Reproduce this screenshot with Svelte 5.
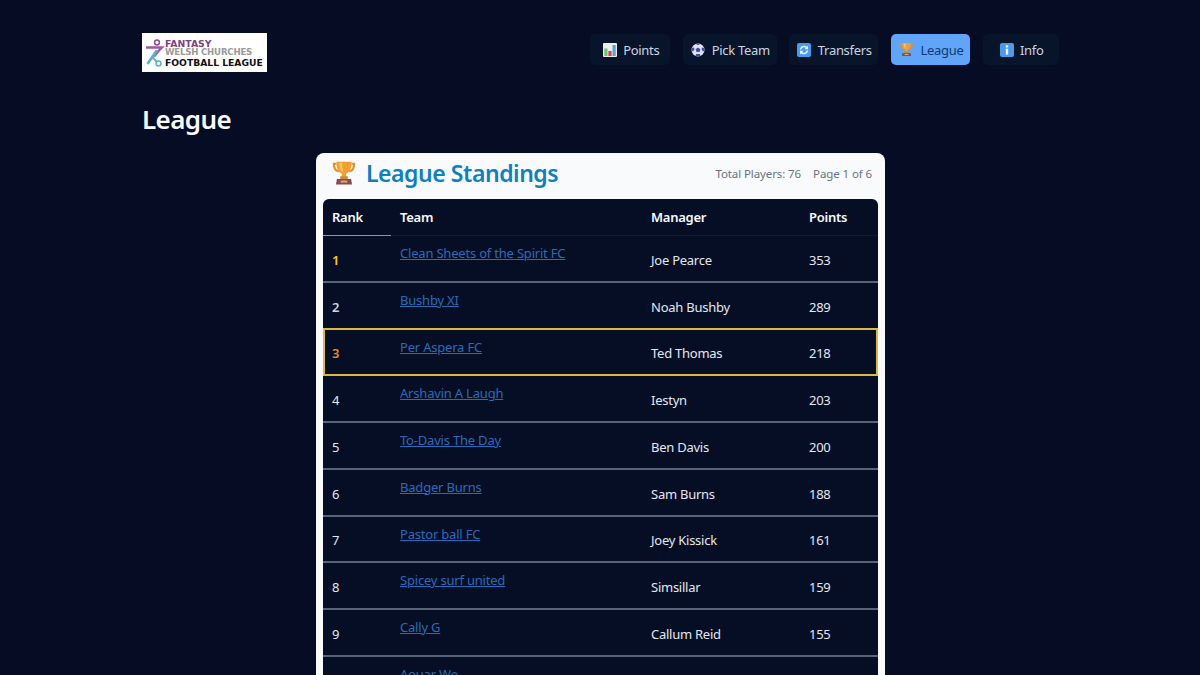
<script>
  const rows = [
    { rank: 1, team: 'Clean Sheets of the Spirit FC', manager: 'Joe Pearce', points: 353, cls: 'gold' },
    { rank: 2, team: 'Bushby XI', manager: 'Noah Bushby', points: 289, cls: 'silver' },
    { rank: 3, team: 'Per Aspera FC', manager: 'Ted Thomas', points: 218, cls: 'bronze', me: true },
    { rank: 4, team: 'Arshavin A Laugh', manager: 'Iestyn', points: 203 },
    { rank: 5, team: 'To-Davis The Day', manager: 'Ben Davis', points: 200 },
    { rank: 6, team: 'Badger Burns', manager: 'Sam Burns', points: 188 },
    { rank: 7, team: 'Pastor ball FC', manager: 'Joey Kissick', points: 161 },
    { rank: 8, team: 'Spicey surf united', manager: 'Simsillar', points: 159 },
    { rank: 9, team: 'Cally G', manager: 'Callum Reid', points: 155 },
    { rank: 10, team: 'Aouar We', manager: 'Luca Taylor', points: 155 }
  ];
  const nav = [
    { label: 'Points', icon: 'chart', w: 80 },
    { label: 'Pick Team', icon: 'ball', w: 94 },
    { label: 'Transfers', icon: 'swap', w: 89 },
    { label: 'League', icon: 'trophy', w: 79.500, active: true },
    { label: 'Info', icon: 'info', w: 76 }
  ];
</script>

{#snippet trophy(size)}
  <svg width={size} height={size} viewBox="0 0 24 24" aria-hidden="true">
    <path d="M5 3.500H2.600c0 4 1.400 6.500 4.600 7M19 3.500h2.400c0 4-1.400 6.500-4.600 7" fill="none" stroke="#e0902a" stroke-width="1.900"/>
    <path d="M5 1.500h14c0 5-1 9.500-5 11v3h-4v-3c-4-1.500-5-6-5-11z" fill="#f0a030"/>
    <path d="M7.500 2.500h3c-.2 3.500 0 6 1 8.500-3-1-3.800-4.500-4-8.500z" fill="#f8c860"/>
    <rect x="8.500" y="15" width="7" height="2.500" fill="#c98a2c"/>
    <path d="M5.500 17.500h13l1 5h-15z" fill="#8a4a50"/>
    <rect x="9" y="19" width="6" height="1.800" fill="#d8b070"/>
  </svg>
{/snippet}

{#snippet icon(name)}
  {#if name === 'chart'}
    <svg width="14" height="14" viewBox="0 0 14 14" aria-hidden="true">
      <rect width="14" height="14" rx="1" fill="#eeeeea"/>
      <rect x="1.300" y="5.500" width="3.200" height="7.500" fill="#6cc46c"/>
      <rect x="5.400" y="8" width="3.200" height="5" fill="#e03c52"/>
      <rect x="9.500" y="2" width="3.200" height="11" fill="#5a9fe6"/>
    </svg>
  {:else if name === 'ball'}
    <svg width="14" height="14" viewBox="0 0 14 14" aria-hidden="true">
      <circle cx="7" cy="7" r="6.500" fill="#dfe4f5"/>
      <path d="M7 4.500l2.400 1.700-.9 2.800h-3l-.9-2.800z" fill="#3f4fa8"/>
      <path d="M5 .9L7 2.200 9 .9C8 .5 6 .5 5 .9zM1 5l1.800-.6.700 1.500-1.300 2.500-1.700-.6C.4 6.800.6 5.800 1 5zM13 5l-1.800-.6-.7 1.500 1.300 2.500 1.700-.6c.1-1 0-2-.5-2.800zM4.500 12.900l.6-1.900h3.800l.6 1.900c-1.500.5-3.500.5-5 0z" fill="#3f4fa8"/>
    </svg>
  {:else if name === 'swap'}
    <svg width="14" height="14" viewBox="0 0 14 14" aria-hidden="true">
      <rect width="14" height="14" rx="2" fill="#4a9be8"/>
      <path d="M3.500 6.500A3.600 3.600 0 0 1 10 5" fill="none" stroke="#f0f6fc" stroke-width="1.500"/>
      <path d="M11 2.800v3.400H7.600z" fill="#f0f6fc"/>
      <path d="M10.500 7.500A3.600 3.600 0 0 1 4 9" fill="none" stroke="#f0f6fc" stroke-width="1.500"/>
      <path d="M3 11.200V7.800h3.400z" fill="#f0f6fc"/>
    </svg>
  {:else if name === 'trophy'}
    {@render trophy(15)}
  {:else}
    <svg width="14" height="14" viewBox="0 0 14 14" aria-hidden="true">
      <rect width="14" height="14" rx="2" fill="#4a9be8"/>
      <rect x="5.800" y="2.300" width="2.400" height="2.200" fill="#f0f6fc"/>
      <rect x="5.800" y="5.700" width="2.400" height="6" fill="#f0f6fc"/>
    </svg>
  {/if}
{/snippet}

<div class="page">
  <header class="top">
    <div class="logo">
      <svg class="mark" width="22" height="30" viewBox="0 0 22 30" aria-hidden="true">
        <circle cx="14" cy="4.500" r="2.400" fill="none" stroke="#8a4a90" stroke-width="1.500"/>
        <path d="M3 9.500h16l-3 3-5 6" fill="none" stroke="#9a5aa0" stroke-width="2.400"/>
        <path d="M14 12L4.500 26" fill="none" stroke="#5ab4c8" stroke-width="2.600"/>
        <path d="M9 19l5 5" fill="none" stroke="#5ab4c8" stroke-width="1.800"/>
        <circle cx="15.500" cy="25.500" r="2.500" fill="none" stroke="#5ab4c8" stroke-width="1.500"/>
      </svg>
      <div class="logotext">
        <span class="l1">FANTASY</span>
        <span class="l2">WELSH CHURCHES</span>
        <span class="l3">FOOTBALL LEAGUE</span>
      </div>
    </div>
    <nav class="nav">
      {#each nav as item}
        <a class="navitem" class:active={item.active} href="#top" style="width: {item.w}px">
          {@render icon(item.icon)}
          <span>{item.label}</span>
        </a>
      {/each}
    </nav>
  </header>

  <h1>League</h1>

  <section class="card">
    <div class="cardhead">
      <div class="title">
        {@render trophy(26)}
        <h2>League Standings</h2>
      </div>
      <div class="meta">
        <span>Total Players: 76</span>
        <span>Page 1 of 6</span>
      </div>
    </div>
    <table>
      <thead>
        <tr>
          <th class="c1">Rank</th>
          <th class="c2">Team</th>
          <th class="c3">Manager</th>
          <th class="c4">Points</th>
        </tr>
      </thead>
      <tbody>
        {#each rows as r}
          <tr class:me={r.me}>
            <td class="rank {r.cls ?? ''}">{r.rank}</td>
            <td class="team"><a href="#top">{r.team}</a></td>
            <td>{r.manager}</td>
            <td>{r.points}</td>
          </tr>
        {/each}
      </tbody>
    </table>
  </section>
</div>

<style>
  :global(body) {
    margin: 0;
    background: #050c24;
    height: 675px;
    overflow: hidden;
  }
  .page {
    width: 916px;
    margin: 0 auto;
    padding-top: 33px;
    font-family: "Noto Sans", "Open Sans", sans-serif;
    color: #f1f5f9;
  }
  .top {
    display: flex;
    justify-content: space-between;
    align-items: flex-start;
  }
  .logo {
    width: 125px;
    height: 39px;
    background: #fff;
    display: flex;
    align-items: center;
    padding-left: 1px;
    box-sizing: border-box;
  }
  .mark { flex: none; }
  .logotext {
    display: flex;
    flex-direction: column;
    font-family: "DejaVu Sans", sans-serif;
    font-weight: 700;
    line-height: 9.500px;
    white-space: nowrap;
    margin-top: 1px;
  }
  .l1 { font-size: 9.300px; color: #7f3f86; }
  .l2 { font-size: 8.600px; color: #9a9a9a; letter-spacing: -0.200px; }
  .l3 { font-size: 9.200px; color: #111; }
  .nav {
    display: flex;
    gap: 12.500px;
    margin-top: 1px;
    margin-right: -0.500px;
  }
  .navitem {
    display: flex;
    align-items: center;
    justify-content: center;
    gap: 6.500px;
    height: 31px;
    padding-left: 2px;
    box-sizing: border-box;
    border-radius: 5px;
    background: #07142a;
    color: #cbd5e1;
    font-size: 13px;
    text-decoration: none;
    letter-spacing: -0.320px;
  }
  .navitem.active {
    background: #60a5fa;
    color: #0f3a70;
  }
  h1 {
    margin: 0;
    padding-top: 29px;
    font-size: 26px;
    line-height: 37px;
    font-weight: 600;
    letter-spacing: -0.600px;
    color: #f8fafc;
  }
  .card {
    width: 569px;
    margin: 15px auto 0 174px;
    background: #f8fafc;
    border-radius: 8px 8px 0 0;
    padding: 0 7px;
    box-sizing: border-box;
  }
  .cardhead {
    height: 46px;
    display: flex;
    justify-content: space-between;
    align-items: center;
    padding: 0 6px 6px 8px;
    box-sizing: border-box;
  }
  .title {
    display: flex;
    align-items: center;
    gap: 9px;
  }
  h2 {
    margin: 0;
    font-size: 23px;
    font-weight: 600;
    letter-spacing: -0.450px;
    color: #0f7fbe;
    line-height: 30px;
  }
  .meta {
    display: flex;
    gap: 12px;
    font-size: 11.500px;
    color: #6b7280;
    letter-spacing: -0.100px;
  }
  table {
    width: 555px;
    border-collapse: separate;
    border-spacing: 0;
    table-layout: fixed;
    background: #060e26;
    border-radius: 6px 6px 0 0;
    font-size: 13px;
    letter-spacing: -0.250px;
    color: #e2e8f0;
  }
  th {
    height: 37px;
    padding: 0 0 0 9px;
    box-sizing: border-box;
    text-align: left;
    font-weight: 600;
    color: #f8fafc;
    border-bottom: 1px solid #101a33;
  }
  th.c1 { width: 68px; border-bottom-color: #8b93a3; }
  th.c2 { width: 251px; }
  th.c3 { width: 158px; }
  td {
    height: 46.750px;
    padding: 3px 0 0 9px;
    box-sizing: border-box;
    border-bottom: 2px solid #596378;
    vertical-align: middle;
  }
  td.team { vertical-align: top; padding-top: 8px; }
  .team a { color: #2a6bb8; letter-spacing: -0.200px; }
  .rank { font-weight: 600; color: #e2e8f0; }
  tbody tr:nth-child(n+4) .rank { font-weight: 400; }
  .rank.gold { color: #facc15; }
  .rank.silver { color: #cbd5e1; }
  .rank.bronze { color: #e08a3c; }
  tr:has(+ tr.me) td { border-bottom-color: #d9b84a; }
  tr.me td { border-bottom-color: #d9b84a; }
  tr.me td:first-child { border-left: 2px solid #d9b84a; padding-left: 7px; }
  tr.me td:last-child { border-right: 2px solid #d9b84a; }
</style>
